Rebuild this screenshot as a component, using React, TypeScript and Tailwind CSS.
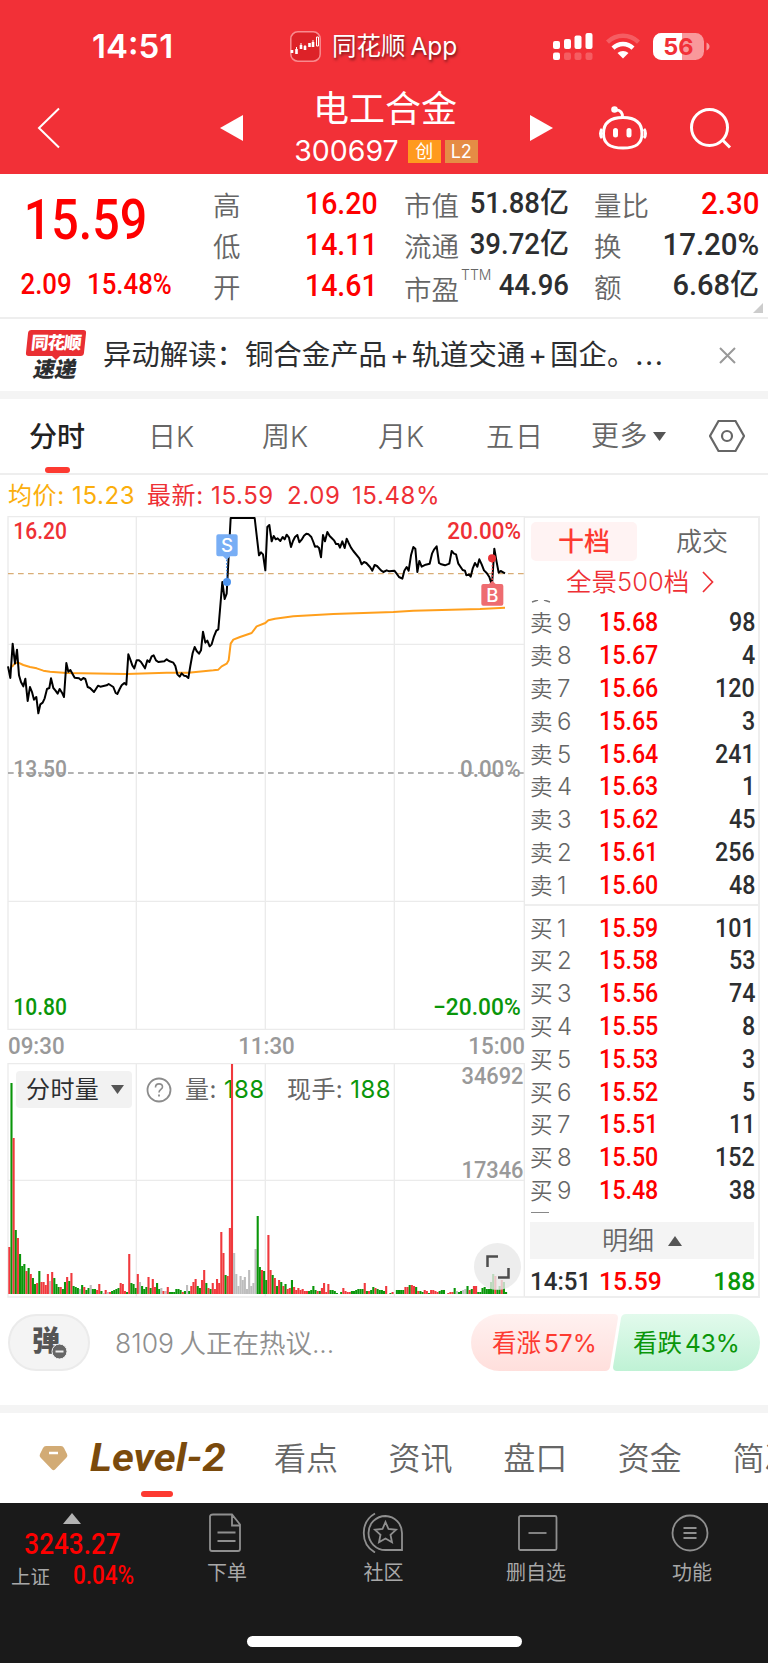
import React from 'react';
import { clsx } from 'clsx';

interface BookRow {
  level: number;
  price: string;
  qty: number;
}

const SELL: BookRow[] = [
  { level: 9, price: '15.68', qty: 98 },
  { level: 8, price: '15.67', qty: 4 },
  { level: 7, price: '15.66', qty: 120 },
  { level: 6, price: '15.65', qty: 3 },
  { level: 5, price: '15.64', qty: 241 },
  { level: 4, price: '15.63', qty: 1 },
  { level: 3, price: '15.62', qty: 45 },
  { level: 2, price: '15.61', qty: 256 },
  { level: 1, price: '15.60', qty: 48 },
];

const BUY: BookRow[] = [
  { level: 1, price: '15.59', qty: 101 },
  { level: 2, price: '15.58', qty: 53 },
  { level: 3, price: '15.56', qty: 74 },
  { level: 4, price: '15.55', qty: 8 },
  { level: 5, price: '15.53', qty: 3 },
  { level: 6, price: '15.52', qty: 5 },
  { level: 7, price: '15.51', qty: 11 },
  { level: 8, price: '15.50', qty: 152 },
  { level: 9, price: '15.48', qty: 38 },
];

// chart series, in 1/3 px units
const PRICE_LINE =
  '24,468 31,503 38,400 45,460 51,418 57,495 63,515 70,528 76,505 83,572 90,530 96,545 102,568 109,560 115,609 121,582 128,577 134,564 141,536 148,533 153,504 160,533 166,540 173,550 179,536 186,547 192,560 199,458 205,484 211,479 224,502 237,504 243,509 250,503 256,506 263,530 270,533 282,545 294,526 301,529 320,525 326,521 340,530 347,548 352,551 359,536 365,525 373,518 379,523 385,432 391,448 397,465 403,474 410,450 417,450 423,455 435,474 442,450 448,455 455,438 461,435 468,450 475,455 493,453 500,447 507,452 520,457 526,467 532,492 539,499 545,489 552,496 558,497 565,503 571,467 578,428 584,410 590,422 597,430 603,420 609,364 616,397 622,391 629,408 635,402 642,378 649,361 655,357 667,215 674,266 680,250 692,23 764,23 777,135 783,126 789,132 796,180 802,50 808,44 815,93 821,77 827,87 833,84 841,92 848,80 854,87 860,73 867,82 873,110 879,92 885,80 892,74 898,96 905,88 912,76 919,70 926,72 934,80 940,95 945,109 952,108 957,113 963,141 969,74 975,93 982,65 989,77 995,83 1002,90 1008,101 1015,101 1020,112 1027,93 1034,113 1040,85 1046,98 1053,112 1060,122 1078,144 1085,162 1092,155 1099,158 1110,170 1117,181 1124,164 1131,167 1143,180 1150,185 1160,180 1168,183 1183,181 1190,190 1197,200 1207,205 1213,181 1220,170 1226,181 1233,135 1240,110 1246,115 1252,185 1258,152 1265,169 1277,163 1289,160 1296,130 1302,118 1310,108 1317,158 1324,162 1335,165 1348,160 1355,122 1362,130 1368,132 1375,160 1388,179 1395,181 1399,195 1407,192 1412,199 1418,175 1425,158 1432,169 1438,147 1445,162 1452,180 1460,188 1468,200 1476,225 1483,115 1489,150 1496,187 1502,182 1515,189';

const AVG_LINE =
  '36,470 45,458 55,457 70,464 90,470 110,474 130,481 150,484 200,488 380,491 500,487 565,487 640,480 655,478 665,468 680,460 686,450 692,400 700,388 720,380 755,368 770,348 796,338 805,330 825,325 880,318 1000,311 1180,305 1240,301 1440,296 1515,292';

// one entry per minute: direction (r up, g down, n flat) and bar height
const VOLUME =
  'r47 g211 r156 g64 r56 g40 g28 g30 r23 g26 r20 g16 g10 r11 g23 r12 r12 r9 r20 n13 r22 g16 g10 g7 r7 g5 g12 r17 g13 r21 g8 g7 g6 n5 g9 r7 g4 g6 n9 g5 g5 r4 r10 g3 n1 r4 n2 r2 g3 g4 g5 g6 r11 r10 r3 g2 r40 g11 g10 g6 r20 n12 g8 g5 g7 r17 g6 r15 r7 g11 g5 n6 r3 n3 r7 g2 g2 g2 g5 g5 g4 r2 g3 n9 g3 r8 r12 r15 g8 g6 r14 r24 g11 r6 g5 r11 r5 r15 r11 r62 r41 g19 r18 r66 r230 n41 n20 n8 n18 n14 n17 n5 n24 n8 n11 n45 g78 g27 r24 g23 g14 r59 r24 g19 r16 g8 r14 g12 r8 g10 r5 r6 g14 r7 r4 r6 r4 r5 r3 r3 g3 g4 g8 g4 r3 g3 r6 r11 r2 r10 g4 g4 g3 g1 n0 g2 r6 r3 r2 r2 g3 g3 g4 g5 g5 g5 r11 g3 r3 g4 g7 r6 g5 g4 g4 g3 r8 n0 g1 r2 n0 g4 g4 g4 g4 r7 r7 g9 r9 r8 g7 r3 g3 g2 r4 r3 g1 r4 r4 r3 r2 g3 g4 g4 n0 r1 r2 r2 g6 n3 g2 g3 n4 n5 g8 r4 g5 r8 r8 g2 g2 g6 g7 g5 g5 g12 g20 r18 g5 g8 r14 g12 g2'.split(' ');

const BAR_COLOR: Record<string, string> = { r: '#f0393d', g: '#0a960a', n: '#bdbdbd' };

const Num: React.FC<{ className?: string; children: React.ReactNode }> = ({ className, children }) => (
  <span className={clsx('inline-block whitespace-nowrap font-[Roboto,sans-serif] font-medium', className)}>{children}</span>
);

const StatusBar = () => (
  <div className="flex h-[88px] items-center pt-[5px]">
    <div className="w-[290px] pl-[92px] text-[33px] font-semibold">14:51</div>
    <div className="flex w-[263px] items-center gap-[11px]">
      <svg width="31" height="31" viewBox="0 0 31 31">
        <rect x=".8" y=".8" width="29.4" height="29.4" rx="7" fill="#dd2228" stroke="#f98a8e" strokeWidth="1.5" />
        <path d="M2 19v3M6.5 18v5M11 14v4M15 15v4M19.5 12v4M23 11v5" stroke="#fff" strokeWidth="2.6" />
        <path d="M11 12v2M6.5 16v2M15 14v1M23 9v2M26.5 6v9h2V6zM6.5 21v2" stroke="#fff" strokeWidth="1" fill="none" />
      </svg>
      <span className="text-[24.5px] whitespace-nowrap [word-spacing:-2px] [text-shadow:1px_2px_3px_rgba(0,0,0,.55)]">同花顺 App</span>
    </div>
    <svg width="160" height="30" viewBox="0 0 160 30" fill="#fff">
      <rect x="0" y="9" width="7" height="8" rx="2" />
      <rect x="11" y="7" width="7" height="10" rx="2" />
      <rect x="21.5" y="3.5" width="7" height="13.5" rx="2" />
      <rect x="32.5" y="1" width="7" height="16" rx="2" />
      <rect x="0" y="20.500" width="7" height="7.500" rx="2" />
      <g fillOpacity=".22">
        <rect x="11" y="20.5" width="7" height="7.5" rx="2" />
        <rect x="21.5" y="20.5" width="7" height="7.5" rx="2" />
        <rect x="32.5" y="20.5" width="7" height="7.5" rx="2" />
      </g>
      <path d="M53 8.500a24 24 0 0 1 34 0l-3 3.300a20 20 0 0 0-28 0z" fillOpacity=".22" />
      <path d="M58.500 14.500a16.500 16.500 0 0 1 23 0l-3 3.300a12 12 0 0 0-17 0z" />
      <path d="M64.500 21a8.500 8.500 0 0 1 11 0l-5.500 5.500z" />
      <rect x="100" y="1" width="51" height="27" rx="8.5" fillOpacity=".5" />
      <path d="M108.500 1H129v27h-20.500a8.500 8.500 0 0 1-8.500-8.500v-10A8.500 8.500 0 0 1 108.500 1z" />
      <path d="M153.500 10.500c4 1.500 4 6.500 0 8z" fillOpacity=".5" />
      <text x="125.5" y="23" textAnchor="middle" fontFamily="Inter" fontWeight="700" fontSize="23.5" fill="#f23037">56</text>
    </svg>
  </div>
);

const TitleBar = () => (
  <div className="flex h-[86px] items-center pb-[6px]">
    <svg className="ml-[36px]" width="26" height="44" viewBox="0 0 26 44">
      <path d="M23 2.500 3 22l20 19.500" fill="none" stroke="#fff" strokeWidth="2" />
    </svg>
    <svg className="ml-[158px]" width="24" height="26" viewBox="0 0 24 26"><path d="M0 13 23 0v26z" fill="#fff" /></svg>
    <div className="flex w-[285px] flex-col items-center pr-[3px]">
      <div className="h-[46px] text-[36px] leading-[36px]">电工合金</div>
      <div className="flex h-[28px] items-center gap-[4px] pl-[2px]">
        <span className="mr-[5px] text-[28.5px] leading-[28px]">300697</span>
        <span className="flex h-[23px] w-[33px] items-center justify-center bg-[#ff9a1e] text-[18px]">创</span>
        <span className="flex h-[23px] w-[33px] items-center justify-center bg-[#e58c45] text-[18px]">L2</span>
      </div>
    </div>
    <svg width="24" height="26" viewBox="0 0 24 26"><path d="M24 13 1 0v26z" fill="#fff" /></svg>
    <svg className="ml-[46px]" width="48" height="48" viewBox="0 0 48 48" fill="none" stroke="#fff" strokeWidth="3">
      <path d="M24 13.500c13 0 19 5.500 19 16 0 9.500-5 14.500-19 14.500S4.500 39 4.500 29.500c0-10.500 6.500-16 19.500-16z" />
      <path d="M23.500 13c0-4-2-7-6-7" />
      <circle cx="15.500" cy="5.500" r="1.800" fill="#fff" />
      <path d="M3 25c-2 2-2 7 0 9M45 25c2 2 2 7 0 9" />
      <path d="M16.500 26.500v4.500M30 26.500v4.500" strokeWidth="5" strokeLinecap="round" />
    </svg>
    <svg className="ml-[42px]" width="44" height="44" viewBox="0 0 44 44" fill="none" stroke="#fff" strokeWidth="3">
      <circle cx="20.5" cy="21.5" r="18" />
      <path d="m33 33.500 8 8" />
    </svg>
  </div>
);

const Stat: React.FC<{ label: string; low?: boolean; sup?: string; children: React.ReactNode }> = ({ label, low, sup, children }) => (
  <div className="flex h-[41.3px] items-center justify-between">
    <span className={clsx('flex text-[27.5px] font-[350] leading-[38px] text-[#666]', low ? 'pt-[9px]' : 'pt-[6px]')}>
      {label}
      {sup && <sup className="top-0 mt-[-3px] ml-[2px] text-[14px] leading-[14px]">{sup}</sup>}
    </span>
    <span className="flex items-center leading-[38px]">{children}</span>
  </div>
);

const RED_NUM = 'text-[32px] text-[#fe0000] scale-x-[.89] origin-right';
const DARK_NUM = 'text-[29px] scale-x-[.95] origin-right';

const Quote = () => (
  <div className="flex h-[145px] border-b-2 border-[#eee] text-[#2c2e30]">
    <div className="w-[213px] text-[#fe0000]">
      <Num className="h-[84px] origin-left scale-x-[.88] pt-[14px] pl-[27px] text-[55px] leading-[64px]">15.59</Num>
      <div className="flex leading-[52px]">
        <Num className="w-[67px] origin-left scale-x-[.89] pl-[23px] text-[29px]">2.09</Num>
        <Num className="ml-[20px] origin-left scale-x-[.89] text-[29px]">15.48%</Num>
      </div>
    </div>
    <div className="w-[165px] pt-[8px]">
      <Stat label="高"><Num className={RED_NUM}>16.20</Num></Stat>
      <Stat label="低"><Num className={RED_NUM}>14.11</Num></Stat>
      <Stat label="开"><Num className={RED_NUM}>14.61</Num></Stat>
    </div>
    <div className="ml-[26px] w-[165px] pt-[8px]">
      <Stat label="市值"><Num className={DARK_NUM}>51.88</Num><b className="text-[29px] font-medium">亿</b></Stat>
      <Stat label="流通"><Num className={DARK_NUM}>39.72</Num><b className="text-[29px] font-medium">亿</b></Stat>
      <Stat label="市盈" sup="TTM" low><Num className={DARK_NUM}>44.96</Num></Stat>
    </div>
    <div className="ml-[25px] w-[165px] pt-[8px]">
      <Stat label="量比"><Num className="origin-right scale-x-[.92] text-[32px] text-[#fe0000]">2.30</Num></Stat>
      <Stat label="换"><Num className="origin-right scale-x-[.92] text-[32px]">17.20%</Num></Stat>
      <Stat label="额"><Num className="origin-right text-[29px]">6.68</Num><b className="text-[29px] font-medium">亿</b></Stat>
    </div>
    <svg className="mb-[4px] -ml-[6px] self-end" width="10" height="10"><path d="M10 0v10H0z" fill="#ccc" /></svg>
  </div>
);

const News = () => (
  <div className="flex h-[72px] items-center text-[#2c2e30]">
    <div className="ml-[26px] flex w-[59px] flex-col items-center">
      <div className="flex h-[26px] w-[58px] -skew-x-6 items-center justify-center rounded-[3px] bg-[#e92f33] text-[17.5px] leading-[24px] font-black tracking-[-1px] text-white">同花顺</div>
      <svg width="8" height="4"><path d="M0 0h8L4 4z" fill="#e92f33" /></svg>
      <div className="-mt-[2px] -skew-x-12 text-[21.5px] leading-[22px] font-black">速递</div>
    </div>
    <div className="ml-[18px] w-[598px] text-[28.4px] whitespace-nowrap">
      异动解读：铜合金产品<span className="ml-[3px] mr-[3px]">+</span>轨道交通<span className="ml-[3px] mr-[3px]">+</span>国企。<span className="tracking-[1.5px]">...</span>
    </div>
    <svg className="ml-[18px]" width="17" height="17"><path d="m1 1 15 15M16 1 1 16" stroke="#999" strokeWidth="2" /></svg>
  </div>
);

const Tabs = () => (
  <div className="flex h-[76px] border-b-2 border-[#eee] text-[28px] leading-[77px] font-[350] text-[#666]">
    <div className="ml-[29px] flex w-[119px] flex-col font-medium text-[#222]">
      <span className="h-[68px]">分时</span>
      <span className="ml-[16px] h-[6px] w-[25px] rounded-full bg-[#fd3a31]" />
    </div>
    <span className="w-[114px]">日K</span>
    <span className="w-[116px]">周K</span>
    <span className="w-[108px]">月K</span>
    <span className="w-[105px] tracking-[1px]">五日</span>
    <span className="flex w-[118px] items-center gap-[5px] tracking-[.5px]">
      更多
      <svg width="13" height="9"><path d="M0 0h13L6.500 9z" fill="#555" /></svg>
    </span>
    <svg className="mt-[20px]" width="36" height="34" viewBox="0 0 36 34" fill="none" stroke="#666" strokeWidth="2.2">
      <path d="M9.500 2h17L35 17l-8.500 15h-17L1 17z" />
      <circle cx="18" cy="17" r="5" />
    </svg>
  </div>
);

const Legend = () => (
  <div className="flex h-[41px] items-center pl-[8px] text-[24px] tracking-[.6px] whitespace-nowrap text-[#ee3035]">
    <span className="w-[139px] text-[#fbae0c]">均价: 15.23</span>
    <span className="w-[140px]">最新: 15.59</span>
    <span className="w-[65px]">2.09</span>
    <span>15.48%</span>
  </div>
);

const AXIS = 'font-[Roboto,sans-serif] font-medium';

const PriceChart = () => (
  <svg className="block" width="518" height="515" viewBox="21 17 1554 1545" fill="none">
    <g stroke="#ebebeb" strokeWidth="4">
      <path d="M24 19H1573V1557H24zM409 18V1557M796 18V1557M1183 18V1557M24 402H1575M24 1173H1575" />
    </g>
    <path d="M24 190H1575" stroke="#d9ad76" strokeWidth="4" strokeDasharray="17 13" />
    <path d="M24 788H1575" stroke="#999" strokeWidth="4" strokeDasharray="17 13" />
    <polyline points={AVG_LINE} stroke="#ff9f1c" strokeWidth="6" strokeLinejoin="round" />
    <polyline points={PRICE_LINE} stroke="#000" strokeWidth="6" strokeLinejoin="round" />
    <g className={AXIS} fontSize="72">
      <text x="40" y="86" fill="#ee3035" textLength="161" lengthAdjust="spacingAndGlyphs">16.20</text>
      <text x="1342" y="86" fill="#ee3035" textLength="221" lengthAdjust="spacingAndGlyphs">20.00%</text>
      <text x="40" y="800" fill="#999" textLength="161" lengthAdjust="spacingAndGlyphs">13.50</text>
      <text x="1380" y="800" fill="#999" textLength="182" lengthAdjust="spacingAndGlyphs">0.00%</text>
      <text x="40" y="1513" fill="#0a960a" textLength="161" lengthAdjust="spacingAndGlyphs">10.80</text>
      <text x="1299" y="1513" fill="#0a960a" textLength="263" lengthAdjust="spacingAndGlyphs">−20.00%</text>
    </g>
    <path d="M680 138V215" stroke="#4c93ee" strokeWidth="4" strokeDasharray="5 5" />
    <circle cx="681" cy="215" r="12" fill="#4c93ee" />
    <path d="M655 72h52q6 0 6 6v54q0 6-6 6h-16l-11 10-11-10h-14q-6 0-6-6V78q0-6 6-6z" fill="#78aef5" />
    <text x="681" y="126" fill="#fff" fontSize="56" textAnchor="middle" fontFamily="Inter" fontWeight="500">S</text>
    <path d="M1477 144V215" stroke="#e93338" strokeWidth="4" strokeDasharray="5 5" />
    <circle cx="1476" cy="144" r="12" fill="#e93338" />
    <path d="M1450 221h17l10-10 10 10h17q6 0 6 6v53q0 6-6 6h-54q-6 0-6-6v-53q0-6 6-6z" fill="#ee6c70" />
    <text x="1477" y="274" fill="#fff" fontSize="56" textAnchor="middle" fontFamily="Inter" fontWeight="500">B</text>
  </svg>
);

const VolumeChart = () => (
  <div className="relative h-[236px] w-[518px]">
    <svg className="block" width="518" height="236" viewBox="7 1063 518 236" fill="none">
      <path d="M8 1063.700H524.300V1297H8zM136.300 1063V1297M265.300 1063V1297M394.300 1063V1297M8 1180.300H525" stroke="#ebebeb" strokeWidth="1.3" />
      <g className={AXIS} fontSize="24" fill="#999">
        <text x="461.5" y="1084" textLength="62" lengthAdjust="spacingAndGlyphs">34692</text>
        <text x="461.5" y="1178" textLength="62" lengthAdjust="spacingAndGlyphs">17346</text>
      </g>
    </svg>
    <div className="absolute top-[8px] left-[9px] flex h-[37px] items-center text-[24px] tracking-[.4px] whitespace-nowrap text-[#666]">
      <span className="flex h-[37px] w-[116px] items-center rounded-[4px] bg-[#f2f2f2] pl-[10px] text-[#2c2e30]">
        分时量
        <svg className="ml-[12px]" width="13" height="9"><path d="M0 0h13L6.500 9z" fill="#555" /></svg>
      </span>
      <svg className="ml-[14px]" width="26" height="26" viewBox="0 0 26 26" fill="none" stroke="#8c8c8c">
        <circle cx="13" cy="13" r="11.500" strokeWidth="1.8" />
        <path d="M9.500 10.500c0-5 7-4.500 7-.5 0 2.500-3.500 2.500-3.500 5.500" strokeWidth="1.6" />
        <path d="M13 17.500v2" strokeWidth="1.8" />
      </svg>
      <span className="ml-[13px] w-[102px]">量: <span className="text-[#0a960a]">188</span></span>
      <span>现手: <span className="text-[#0a960a]">188</span></span>
    </div>
    {/* bars run over the toolbar text */}
    <svg className="absolute top-0 left-0" width="518" height="236" viewBox="7 1063 518 236">
      {VOLUME.map((v, i) => {
        const h = Number(v.slice(1));
        return <rect key={i} x={8.3 + i * 2.141} y={1294 - h} width="2.1" height={h} fill={BAR_COLOR[v[0]]} />;
      })}
    </svg>
    <span className="absolute right-[4px] bottom-[9px] flex h-[47px] w-[47px] items-center justify-center rounded-full bg-[#e9e9e9]/80">
      <svg width="24" height="24" fill="none" stroke="#4d4d4d" strokeWidth="2.5"><path d="M1.500 12V1.500H12M22.500 13v9.500H12" /></svg>
    </span>
  </div>
);

const BookList: React.FC<{ side: string; rows: BookRow[] }> = ({ side, rows }) => (
  <>
    {rows.map(r => (
      <div key={r.level} className="flex h-[32.8px] items-center pr-[3px] pl-[5px] leading-[32px]">
        <span className="w-[27px] text-[22.5px] font-[350] text-[#666]">{side}</span>
        <span className="w-[42px] text-[24px] font-[350] text-[#666]">{r.level}</span>
        <Num className="origin-left scale-x-[.93] text-[25px] text-[#fe0000]">{r.price}</Num>
        <Num className="ml-auto origin-right scale-x-[.93] text-[25px] text-[#2c2e30]">{r.qty}</Num>
      </div>
    ))}
  </>
);

const OrderBook = () => (
  <div className="h-[782px] w-[235px] border-2 border-l-0 border-[#eee]">
    <div className="mt-[4px] ml-[6px] flex h-[39px] text-[26px] leading-[39px]">
      <span className="w-[106px] rounded-[5px] bg-[#fff3f3] text-center font-medium text-[#fd3a31]">十档</span>
      <span className="ml-[39px] font-[350] text-[#666]">成交</span>
    </div>
    <div className="flex h-[39px] items-center pt-[3px] pl-[41px] text-[25.5px] leading-[40px] text-[#ee3035]">
      <span className="font-[350]">全景500档</span>
      <svg className="ml-[13px]" width="12" height="22" fill="none" stroke="#ee3035" strokeWidth="1.7"><path d="m1 1 9.500 10L1 21" /></svg>
    </div>
    {/* level 10 is scrolled out, only its edge shows */}
    <div className="flex h-[7px] items-start pl-[6px]">
      <svg width="20" height="3" stroke="#777" strokeWidth="1.5"><path d="m1 2 6-2M13 0l6 2" /></svg>
    </div>
    <BookList side="卖" rows={SELL} />
    <div className="mt-[2px] mb-[6px] h-[2px] bg-[#eee]" />
    <BookList side="买" rows={BUY} />
    <div className="h-[15px] pt-[5px] pl-[6px]"><div className="h-px w-[18px] bg-[#888]" /></div>
    <div className="ml-[5px] flex h-[37px] w-[224px] items-center justify-center gap-[14px] bg-[#f4f4f4] text-[26px] font-[350] text-[#666]">
      明细
      <svg width="14" height="10"><path d="M0 10h14L7 0z" fill="#555" /></svg>
    </div>
    <div className="flex h-[43px] items-center pr-[3px] pl-[5px] text-[26.5px] text-[#2c2e30]">
      <Num className="w-[69px] origin-left scale-x-[.91]">14:51</Num>
      <Num className="origin-left scale-x-[.93] text-[#fe0000]">15.59</Num>
      <Num className="ml-auto origin-right scale-x-[.93] text-[#0a960a]">188</Num>
    </div>
  </div>
);

const Discuss = () => (
  <div className="flex h-[106px] items-start pt-[15px] pl-[8px]">
    <div className="flex h-[57px] w-[82px] items-center justify-center rounded-full border-2 border-[#ebebeb] bg-[#f4f4f4]">
      <span className="relative right-[3px] bottom-[2px] text-[28px] leading-[30px] font-black text-[#555]">
        弹
        <svg className="absolute -right-[8px] -bottom-[4px]" width="17" height="17">
          <circle cx="8.5" cy="8.5" r="7.5" fill="#666" stroke="#f4f4f4" />
          <path d="M4.500 8.500h8" stroke="#eee" strokeWidth="2" />
        </svg>
      </span>
    </div>
    <div className="ml-[25px] w-[356px] text-[26.5px] leading-[58px] font-[350] text-[#8f8f8f] [word-spacing:-2px]">8109 人正在热议...</div>
    <div className="relative h-[57px] w-[289px] text-[24.5px] leading-[58px]">
      <svg className="absolute inset-0" width="289" height="57">
        <defs>
          <linearGradient id="up" x2="0" y2="1"><stop stopColor="#fff1f0" /><stop offset="1" stopColor="#ffdfdc" /></linearGradient>
          <linearGradient id="down" x2="0" y2="1"><stop stopColor="#e2faec" /><stop offset="1" stopColor="#bff2d5" /></linearGradient>
        </defs>
        <path d="M28.500 0H143q4 0 4 4l-8 49q-1 4-5 4H28.500a28.500 28.500 0 0 1 0-57z" fill="url(#up)" />
        <path d="M155 0h105.500a28.500 28.500 0 0 1 0 57H146q-4 0-4-4l8-49q1-4 5-4z" fill="url(#down)" />
      </svg>
      <div className="relative flex whitespace-nowrap [word-spacing:-4px]">
        <span className="w-[141px] pl-[21px] text-[#fd3a31]">看涨 57%</span>
        <span className="pl-[21px] text-[#0a960a]">看跌 43%</span>
      </div>
    </div>
  </div>
);

const SectionTabs = () => (
  <div className="flex h-[90px] overflow-hidden text-[32px] leading-[92px] font-[350] whitespace-nowrap text-[#666]">
    <svg className="mt-[33px] ml-[39px] shrink-0" width="29" height="26" viewBox="0 0 29 26">
      <path d="M7 0h15q2 0 3 2l3 6q1 2-.5 3.500L16 23.500q-1.500 1.500-3 0L1.500 11.500Q0 10 1 8l3-6q1-2 3-2z" fill="#d2ab75" />
      <path d="M10 7h9" stroke="#fff" strokeWidth="2.5" />
    </svg>
    <div className="ml-[22px] flex w-[184px] shrink-0 flex-col text-[#7a4a0c]">
      <span className="h-[78px] origin-left scale-x-[1.1] font-[Roboto,sans-serif] text-[38px] leading-[90px] font-bold italic">Level-2</span>
      <span className="ml-[51px] h-[6px] w-[32px] rounded-full bg-[#fd3a31]" />
    </div>
    <span className="w-[114.6px] shrink-0">看点</span>
    <span className="w-[114.6px] shrink-0">资讯</span>
    <span className="w-[114.6px] shrink-0">盘口</span>
    <span className="w-[114.6px] shrink-0">资金</span>
    <span className="shrink-0">简况</span>
  </div>
);

const NavItem: React.FC<{ label: string; className: string; children: React.ReactNode }> = ({ label, className, children }) => (
  <div className={clsx('flex shrink-0 flex-col items-center pt-[8px]', className)}>
    <svg width="44" height="42" viewBox="0 0 44 42" fill="none" stroke="#8f8f8f" strokeWidth="1.8">{children}</svg>
    <span className="mt-[5px] text-[20px] leading-[30px] text-[#a8a8a8]">{label}</span>
  </div>
);

const BottomNav = () => (
  <div className="flex h-[160px] flex-col items-center bg-[#1a1a1a]">
    <div className="flex h-[133px] w-full">
      <div className="w-[147px] shrink-0 pt-[10px] text-[#fe0000]">
        <svg className="ml-[63px]" width="18" height="11"><path d="M0 11h18L9 0z" fill="#b3b3b3" /></svg>
        <Num className="origin-left scale-x-[.87] pl-[28px] text-[30px] leading-[40px]">3243.27</Num>
        <div className="-mt-[3px] flex h-[30px] items-center">
          <span className="w-[73px] pt-[3px] pl-[11px] text-[19.5px] text-[#a8a8a8]">上证</span>
          <Num className="origin-left scale-x-[.9] text-[25px]">0.04%</Num>
        </div>
      </div>
      <NavItem label="下单" className="w-[160px]">
        <path d="M8 3.500h19l8 10v24.500q0 2-2 2H7q-2 0-2-2v-32.500q0-2 3-2zM27 4v10.500h8M12.500 21.500h18M12.500 30h18" />
      </NavItem>
      <NavItem label="社区" className="w-[153px]">
        <path d="M23.500 5A17 17 0 1 0 23.500 39H40V22A17 17 0 0 0 23.500 5zM13 2.500C-2 11-2 33 13 41.500" />
        <path d="m23.500 11 3 7 7.500.8-5.500 5 1.500 7.500-6.500-3.800-6.500 3.800 1.500-7.500-5.500-5 7.500-.8z" />
      </NavItem>
      <NavItem label="删自选" className="w-[152px]">
        <rect x="5" y="5" width="37.5" height="34" rx="1.5" />
        <path d="M14.500 22h18" />
      </NavItem>
      <NavItem label="功能" className="w-[160px]">
        <circle cx="20" cy="22" r="17.5" />
        <path d="M13.500 17h13M13.500 22h13M13.500 27h13" />
      </NavItem>
    </div>
    <div className="h-[11px] w-[275px] rounded-full bg-white" />
  </div>
);

export default function App() {
  return (
    <div className="h-[1663px] w-[768px] overflow-hidden bg-white font-[Inter,'Noto_Sans_CJK_SC',sans-serif]">
      <div className="h-[174px] bg-[#f23037] text-white">
        <StatusBar />
        <TitleBar />
      </div>
      <Quote />
      <News />
      <div className="h-[8px] bg-[#f4f4f4]" />
      <Tabs />
      <Legend />
      <div className="flex pl-[7px]">
        <div className="flex w-[518px] flex-col">
          <PriceChart />
          <div className="flex h-[32px] items-center justify-between pl-[1px] text-[24px] leading-[32px] text-[#999]">
            <Num className="origin-left scale-x-[.93] pb-[2px]">09:30</Num>
            <Num className="scale-x-[.93] pb-[2px]">11:30</Num>
            <Num className="origin-right scale-x-[.93] pb-[2px]">15:00</Num>
          </div>
          <VolumeChart />
        </div>
        <OrderBook />
      </div>
      <Discuss />
      <div className="h-[8px] bg-[#f4f4f4]" />
      <SectionTabs />
      <BottomNav />
    </div>
  );
}
